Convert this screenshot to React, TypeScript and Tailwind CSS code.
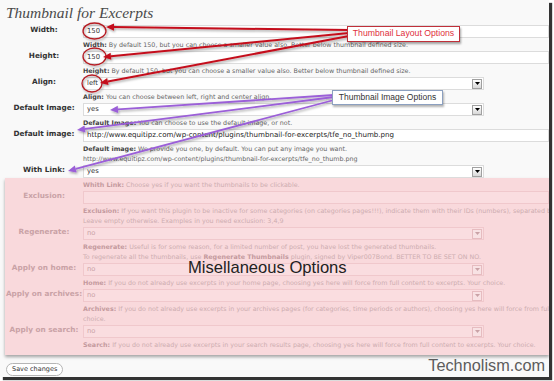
import React from "react";

type Pt = [number, number];

const Arrow = ({ from, to, color, w }: { from: Pt; to: Pt; color: string; w: number }) => {
  const [x1, y1] = from;
  const [x2, y2] = to;
  const a = Math.atan2(y2 - y1, x2 - x1);
  const L = 8;
  const W = 3.6;
  const bx = x2 - L * Math.cos(a);
  const by = y2 - L * Math.sin(a);
  const p1 = `${bx + W * Math.sin(a)},${by - W * Math.cos(a)}`;
  const p2 = `${bx - W * Math.sin(a)},${by + W * Math.cos(a)}`;
  return (
    <g>
      <line x1={x1} y1={y1} x2={bx} y2={by} stroke={color} strokeWidth={w} />
      <polygon points={`${x2},${y2} ${p1} ${p2}`} fill={color} />
    </g>
  );
};

const Row = ({ label, pink, children }: { label: string; pink?: boolean; children: React.ReactNode }) => (
  <div className="flex">
    <div
      className={`${pink ? "w-[78px] text-[#c9a2a6]" : "w-[83px] pl-[5px] text-[#333]"} shrink-0 text-center text-[7.3px] font-bold leading-[9px] whitespace-nowrap`}
    >
      {label}
    </div>
    <div className="flex-1 min-w-0 pb-[1px]">{children}</div>
  </div>
);

const Desc = ({ pink, children }: { pink?: boolean; children: React.ReactNode }) => (
  <div className={`mt-[2px] text-[6.35px] leading-[10px] whitespace-nowrap ${pink ? "text-[#cdadb0]" : "text-[#666]"}`}>
    {children}
  </div>
);

const B = ({ pink, children }: { pink?: boolean; children: React.ReactNode }) => (
  <b className={pink ? "text-[#c49a9e]" : "text-[#444]"}>{children}</b>
);

const TextInput = ({ value, pink, big }: { value?: string; pink?: boolean; big?: boolean }) => (
  <div
    className={`h-[13px] border flex items-center px-[3px] whitespace-nowrap overflow-hidden ${
      pink ? "bg-[#fadde0] border-[#f0c8cc]" : "bg-white border-[#dcdcdc]"
    } ${big ? "text-[7.1px] text-[#222]" : "text-[6.8px] text-[#333]"}`}
  >
    {value}
  </div>
);

const Select = ({ value, pink }: { value: string; pink?: boolean }) => (
  <div
    className={`w-[401px] h-[13px] border flex items-center justify-between pl-[3px] pr-[1px] text-[6.8px] ${
      pink ? "bg-[#fadde0] border-[#f0c8cc] text-[#c9a2a6]" : "bg-white border-[#dcdcdc] text-[#333]"
    }`}
  >
    <span>{value}</span>
    <div
      className={`w-[10px] h-[10px] border flex items-center justify-center ${
        pink ? "border-[#e6bcc0] bg-[#f8e2e4]" : "border-[#a0a0a0] bg-gradient-to-b from-white to-[#d8d8d8]"
      }`}
    >
      <svg width="5" height="3" viewBox="0 0 5 3">
        <path d="M0 0h5L2.5 3z" fill={pink ? "#c9a2a6" : "#000"} />
      </svg>
    </div>
  </div>
);

export default function App() {
  return (
    <div className="min-h-screen bg-white font-['DejaVu_Sans',sans-serif]">
      <div className="relative w-[549px] h-[377px] bg-[#f9f9f9] overflow-hidden shadow-[3px_3px_1px_rgba(0,0,0,0.8)]">
        <h1 className="h-[25px] pt-[2px] pl-[6px] leading-[21px] text-[15.5px] italic text-[#4a4a4a] font-['Liberation_Serif',serif]">
          Thumbnail for Excerpts
        </h1>

        <Row label="Width:">
          <TextInput value="150" />
          <Desc>
            <B>Width:</B> By default 150, but you can choose a smaller value also. Better below thumbnail defined size.
          </Desc>
        </Row>
        <Row label="Height:">
          <TextInput value="150" />
          <Desc>
            <B>Height:</B> By default 150, but you can choose a smaller value also. Better below thumbnail defined size.
          </Desc>
        </Row>
        <Row label="Align:">
          <Select value="left" />
          <Desc>
            <B>Align:</B> You can choose between left, right and center align.
          </Desc>
        </Row>
        <Row label="Default Image:">
          <Select value="yes" />
          <Desc>
            <B>Default Image:</B> You can choose to use the default image, or not.
          </Desc>
        </Row>
        <Row label="Default image:">
          <TextInput big value="http://www.equitipz.com/wp-content/plugins/thumbnail-for-excerpts/tfe_no_thumb.png" />
          <Desc>
            <B>Default image:</B> We provide you one, by default. You can put any image you want.
            <br />
            http://www.equitipz.com/wp-content/plugins/thumbnail-for-excerpts/tfe_no_thumb.png
          </Desc>
        </Row>
        <div className="flex">
          <div className="w-[83px] pl-[5px] shrink-0 text-center text-[7.3px] font-bold leading-[9px] text-[#333]">
            With Link:
          </div>
          <div className="flex-1">
            <Select value="yes" />
          </div>
        </div>

        <div className="ml-[5px] pb-[4px] bg-[#f9d9dc] shadow-[0_2px_3px_rgba(0,0,0,0.35)]">
          <div className="flex pb-[1px]">
            <div className="w-[78px] shrink-0" />
            <Desc pink>
              <B pink>Whith Link:</B> Choose yes if you want the thumbnails to be clickable.
            </Desc>
          </div>
          <Row pink label="Exclusion:">
            <TextInput pink />
            <Desc pink>
              <B pink>Exclusion:</B> If you want this plugin to be inactive for some categories (on categories pages!!!), indicate them with their IDs (numbers), separated by commas.
              <br />
              Leave empty otherwise. Examples in you need exclusion: 3,4,9
            </Desc>
          </Row>
          <Row pink label="Regenerate:">
            <Select pink value="no" />
            <Desc pink>
              <B pink>Regenerate:</B> Useful is for some reason, for a limited number of post, you have lost the generated thumbnails.
              <br />
              To regenerate all the thumbnails, use <B pink>Regenerate Thumbnails</B> plugin, signed by Viper007Bond. BETTER TO BE SET ON NO.
            </Desc>
          </Row>
          <Row pink label="Apply on home:">
            <Select pink value="no" />
            <Desc pink>
              <B pink>Home:</B> If you do not already use excerpts in your home page, choosing yes here will force from full content to excerpts. Your choice.
            </Desc>
          </Row>
          <Row pink label="Apply on archives:">
            <Select pink value="no" />
            <Desc pink>
              <B pink>Archives:</B> If you do not already use excerpts in your archives pages (for categories, time periods or authors), choosing yes here will force from full content to excerpts. Your
              <br />
              choice.
            </Desc>
          </Row>
          <Row pink label="Apply on search:">
            <Select pink value="no" />
            <Desc pink>
              <B pink>Search:</B> If you do not already use excerpts in your search results page, choosing yes here will force from full content to excerpts. Your choice.
            </Desc>
          </Row>
        </div>

        <div className="mt-[8px] pl-[6px] pr-[4px] flex items-start justify-between">
          <button className="h-[13px] px-[5px] rounded-full border border-[#b5b5b5] bg-white text-[6.5px] leading-[11px] text-[#333]">
            Save changes
          </button>
          <span className="-mt-[6px] text-[16.3px] leading-[16px] text-[#5c5c5c] font-['Liberation_Sans',Arial,sans-serif]">
            Technolism.com
          </span>
        </div>

        {/* annotations */}
        <svg className="absolute inset-0 pointer-events-none" width="549" height="377">
          <defs>
            <filter id="sh" x="-20%" y="-20%" width="140%" height="140%">
              <feDropShadow dx="1" dy="1.5" stdDeviation="0.8" floodColor="#000" floodOpacity="0.35" />
            </filter>
          </defs>
          <g filter="url(#sh)" fill="none">
            <ellipse cx="94.5" cy="31" rx="11.5" ry="8" stroke="#b51c24" strokeWidth="1.3" />
            <ellipse cx="94.5" cy="56.5" rx="11.5" ry="8.5" stroke="#b51c24" strokeWidth="1.3" />
            <ellipse cx="92" cy="83.5" rx="10" ry="8.5" stroke="#b51c24" strokeWidth="1.3" />
          </g>
          <g filter="url(#sh)">
            <Arrow from={[349, 30]} to={[106, 27]} color="#c4101c" w={2} />
            <Arrow from={[349, 33]} to={[103, 57]} color="#c4101c" w={2} />
            <Arrow from={[349, 36]} to={[100, 83]} color="#c4101c" w={2} />
            <Arrow from={[334, 95]} to={[110, 110]} color="#9b5fd8" w={1.8} />
            <Arrow from={[334, 97]} to={[77, 130]} color="#9b5fd8" w={1.8} />
            <Arrow from={[334, 100]} to={[68, 171]} color="#9b5fd8" w={1.8} />
          </g>
        </svg>

        <div className="absolute left-[347px] top-[26px] w-[113px] h-[16px] bg-white border border-[#c0303a] shadow-[1px_2px_2px_rgba(0,0,0,0.35)] flex items-center justify-center text-[8.7px] text-[#e0303c] font-['Liberation_Sans',Arial,sans-serif]">
          Thumbnail Layout Options
        </div>
        <div className="absolute left-[332px] top-[90px] w-[111px] h-[15px] bg-white border border-[#8ca0c0] shadow-[1px_2px_2px_rgba(0,0,0,0.3)] flex items-center justify-center text-[8.5px] text-[#333] font-['Liberation_Sans',Arial,sans-serif]">
          Thumbnail Image Options
        </div>
        <div className="absolute left-[188px] top-[259px] text-[16.6px] leading-[17px] text-[#222] font-['Liberation_Sans',Arial,sans-serif]">
          Misellaneous Options
        </div>
      </div>
    </div>
  );
}
